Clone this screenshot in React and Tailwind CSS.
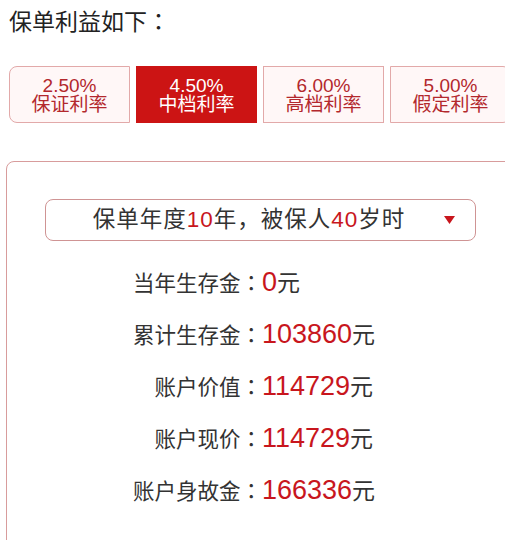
import React from "react";

const tabs = [
  { rate: "2.50%", name: "保证利率" },
  { rate: "4.50%", name: "中档利率", active: true },
  { rate: "6.00%", name: "高档利率" },
  { rate: "5.00%", name: "假定利率" },
];

const rows = [
  { label: "当年生存金", value: "0" },
  { label: "累计生存金", value: "103860" },
  { label: "账户价值", value: "114729" },
  { label: "账户现价", value: "114729" },
  { label: "账户身故金", value: "166336" },
];

// full-width colon, centred in its cell like the reference
function Colon() {
  return <span className="leading-none font-['Noto_Sans_CJK_TC',sans-serif]">：</span>;
}

export default function App() {
  return (
    <div className="w-[505px] h-[540px] overflow-hidden bg-white text-[#333] font-['Liberation_Sans','Noto_Sans_CJK_SC',sans-serif]">
      {/* Title */}
      <div className="pl-[9px] pt-[6px] text-[23px] leading-[32px] text-[#222]">
        保单利益如下<Colon />
      </div>

      {/* Rate tabs */}
      <div className="flex gap-[6px] pl-[9px] mt-[28px] w-[560px]">
        {tabs.map((t, i) => (
          <div
            key={t.rate}
            className={`w-[121px] h-[57px] flex-shrink-0 flex flex-col items-center justify-center text-[19px] leading-[19px] border ${
              t.active
                ? "bg-[#cc1414] border-[#cc1414] text-white"
                : "bg-[#fff7f7] border-[#e2a9a9] text-[#b3282d]"
            } ${i === 0 ? "rounded-l-[8px]" : ""} ${i === tabs.length - 1 ? "rounded-r-[8px]" : ""}`}
          >
            <span>{t.rate}</span>
            <span>{t.name}</span>
          </div>
        ))}
      </div>

      {/* Result card */}
      <div className="ml-[6px] mt-[38px] w-[509px] h-[420px] border border-[#d89c9c] rounded-[8px] pt-[37px]">
        <div className="ml-[38px] w-[431px] h-[42px] border border-[#cf9494] rounded-[8px] flex items-center pl-[8px]">
          <span className="flex-1 text-center text-[22.5px] tracking-[1px] whitespace-nowrap">
            保单年度<span className="text-[#c8161d]">10</span>年，被保人<span className="text-[#c8161d]">40</span>岁时
          </span>
          <svg width="11" height="8" viewBox="0 0 11 8" className="mr-[20px] flex-shrink-0">
            <path d="M0 0 H11 L5.5 8 Z" fill="#c8161d" />
          </svg>
        </div>

        <div className="mt-[15px] flex flex-col">
          {rows.map((r) => (
            <div key={r.value + r.label} className="flex items-center h-[52px]">
              <div className="whitespace-nowrap">
                <span className="inline-block w-[255px] text-right text-[21.5px]">
                  {r.label}
                  <Colon />
                </span>
                <span className="text-[27px] text-[#c8161d]">{r.value}</span>
                <span className="text-[23px]">元</span>
              </div>
            </div>
          ))}
        </div>
      </div>
    </div>
  );
}
